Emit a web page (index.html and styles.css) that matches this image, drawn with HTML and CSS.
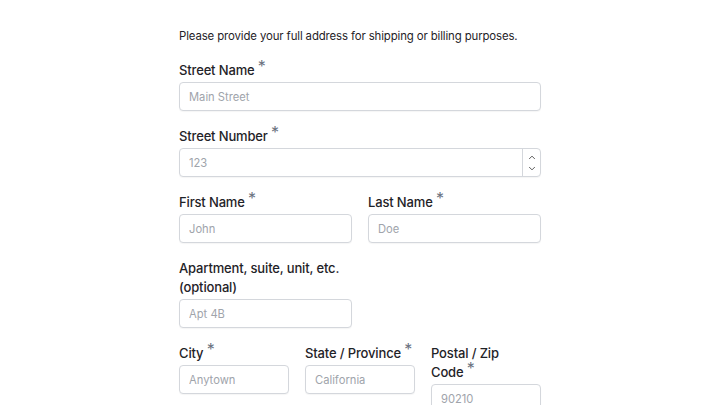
FILE: index.html
```html
<!DOCTYPE html>
<html lang="en">
<head>
<meta charset="utf-8">
<title>Address</title>
<link rel="stylesheet" href="styles.css">
</head>
<body>
<form class="form">
  <p class="intro">Please provide your full address for shipping or billing purposes.</p>

  <div class="field">
    <label class="label">Street Name <span class="req">*</span></label>
    <input class="input" type="text" placeholder="Main Street">
  </div>

  <div class="field">
    <label class="label">Street Number <span class="req">*</span></label>
    <div class="number">
      <input class="number-input" type="text" placeholder="123">
      <div class="spin">
        <svg class="chev" viewBox="0 0 10 6" width="8" height="5"><path d="M1.5 4.8 5 1.3 8.5 4.8" fill="none" stroke="#555" stroke-width="1.2"/></svg>
        <svg class="chev" viewBox="0 0 10 6" width="8" height="5"><path d="M1.5 1.2 5 4.7 8.5 1.2" fill="none" stroke="#555" stroke-width="1.2"/></svg>
      </div>
    </div>
  </div>

  <div class="row row-2">
    <div class="field">
      <label class="label">First Name <span class="req">*</span></label>
      <input class="input" type="text" placeholder="John">
    </div>
    <div class="field">
      <label class="label">Last Name <span class="req">*</span></label>
      <input class="input" type="text" placeholder="Doe">
    </div>
  </div>

  <div class="row row-2">
    <div class="field">
      <label class="label">Apartment, suite, unit, etc. (optional)</label>
      <input class="input" type="text" placeholder="Apt 4B">
    </div>
  </div>

  <div class="row row-3">
    <div class="field">
      <label class="label">City <span class="req">*</span></label>
      <input class="input" type="text" placeholder="Anytown">
    </div>
    <div class="field">
      <label class="label">State / Province <span class="req">*</span></label>
      <input class="input" type="text" placeholder="California">
    </div>
    <div class="field">
      <label class="label">Postal / Zip <span class="nowrap">Code <span class="req">*</span></span></label>
      <input class="input" type="text" placeholder="90210">
    </div>
  </div>
</form>
</body>
</html>
```

FILE: styles.css
```css
* { box-sizing: border-box; }
html, body { margin: 0; padding: 0; background: #fff; }
body {
  font-family: "Inter", "Liberation Sans", sans-serif;
  color: #1f2328;
  overflow: hidden;
}
.form {
  width: 362px;
  margin: 0 auto;
  padding-top: 27px;
  display: flex;
  flex-direction: column;
}
.intro {
  margin: 0 0 16px;
  font-size: 11.4px;
  line-height: 18px;
  letter-spacing: -0.12px;
  color: #1f2328;
}
.field {
  display: flex;
  flex-direction: column;
  margin-bottom: 16px;
}
.row .field { margin-bottom: 0; }
.row { display: grid; gap: 16px; margin-bottom: 16px; align-items: start; }
.row-2 { grid-template-columns: 1fr 1fr; }
.row-3 { grid-template-columns: 1fr 1fr 1fr; }
.label {
  font-size: 13px;
  font-weight: 500;
  line-height: 19px;
  letter-spacing: -0.15px;
  color: #1f2328;
  margin-bottom: 2px;
}
.nowrap { white-space: nowrap; }
.req {
  color: #6b7280;
  font-weight: 400;
  font-size: 16px;
  line-height: 0;
  position: relative;
  top: -3px;
}
.input, .number {
  height: 29px;
  width: 100%;
  border: 1px solid #d4d7dc;
  border-radius: 4px;
  background: #fff;
  box-shadow: 0 1px 1px rgba(0,0,0,0.04);
}
.input {
  padding: 0 9px;
  font: 400 11.2px "Inter", "Liberation Sans", sans-serif;
  color: #1f2328;
  outline: none;
}
.input::placeholder, .number-input::placeholder { color: #a0a4ab; }
.number {
  display: flex;
  align-items: stretch;
}
.number-input {
  flex: 1;
  min-width: 0;
  border: 0;
  padding: 0 9px;
  font: 400 11.2px "Inter", "Liberation Sans", sans-serif;
  background: transparent;
  outline: none;
}
.spin {
  width: 18px;
  border-left: 1px solid #d4d7dc;
  display: flex;
  flex-direction: column;
  align-items: center;
  justify-content: center;
  gap: 6px;
}
.chev { display: block; }
```
